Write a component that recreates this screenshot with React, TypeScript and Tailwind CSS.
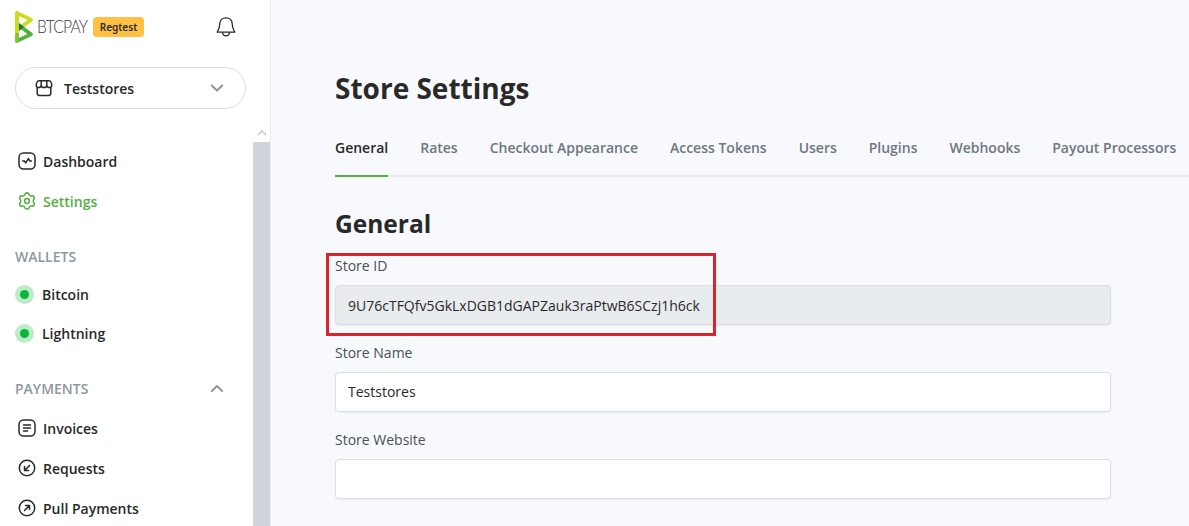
import type { ReactNode } from "react";

const tabs = ["General", "Rates", "Checkout Appearance", "Access Tokens", "Users", "Plugins", "Webhooks", "Payout Processors"];

function polar(radius: number, degrees: number) {
  const angle = (degrees * Math.PI) / 180;
  return `${(12 + radius * Math.sin(angle)).toFixed(2)} ${(12 - radius * Math.cos(angle)).toFixed(2)}`;
}

const gearPath =
  `M${polar(7.5, -14)}` +
  [0, 60, 120, 180, 240, 300]
    .map((a) => `Q${polar(9, a)} ${polar(7.5, a + 14)}Q${polar(5.1, a + 30)} ${polar(7.5, a + 46)}`)
    .join("") +
  "Z";

function Icon({ children }: { children: ReactNode }) {
  return (
    <svg className="size-6 shrink-0" viewBox="0 0 24 24" fill="none" stroke="currentColor" strokeWidth="1.5" strokeLinecap="round" strokeLinejoin="round">
      {children}
    </svg>
  );
}

function Logo() {
  return (
    <svg className="h-8 w-[18px] shrink-0" viewBox="0 0 47 84">
      <path d="M5.206 83.433a4.86 4.86 0 01-4.859-4.861V5.431a4.86 4.86 0 119.719 0v73.141a4.861 4.861 0 01-4.86 4.861" fill="#CEDC21" />
      <path d="M5.209 83.433a4.862 4.862 0 01-2.086-9.253L32.43 60.274 2.323 38.093a4.861 4.861 0 015.766-7.826l36.647 26.999a4.864 4.864 0 01-.799 8.306L7.289 82.964a4.866 4.866 0 01-2.080.469" fill="#51B13E" />
      <path d="M5.211 54.684a4.86 4.86 0 01-2.887-8.774L32.43 23.73 3.123 9.821a4.861 4.861 0 014.166-8.784l36.648 17.394a4.86 4.86 0 01.799 8.305l-36.647 27a4.844 4.844 0 01-2.878.948" fill="#CEDC21" />
      <path d="M10.066 31.725v20.553L24.01 42.006z" fill="#1E7A44" />
      <path d="M10.066 5.431A4.861 4.861 0 005.206.57 4.86 4.86 0 00.347 5.431v61.165h9.72V5.431z" fill="#CEDC21" />
      <path d="M.347 58v20.572a4.86 4.86 0 009.719 0V58z" fill="#7dc433" />
    </svg>
  );
}

function NavItem({ icon, label, active }: { icon: ReactNode; label: string; active?: boolean }) {
  return (
    <a className={active ? "flex h-10 shrink-0 items-center gap-1 text-[#51b13e]" : "flex h-10 shrink-0 items-center gap-1"}>
      {icon}
      <span>{label}</span>
    </a>
  );
}

function Wallet({ label }: { label: string }) {
  return (
    <a className="flex h-[39px] shrink-0 items-center gap-2">
      <span className="flex size-[19px] items-center justify-center rounded-full bg-[#bcecc7]">
        <span className="size-[9px] rounded-full bg-[#0ab53a]" />
      </span>
      <span>{label}</span>
    </a>
  );
}

function Field({ label, value, readOnly }: { label: string; value: string; readOnly?: boolean }) {
  return (
    <div className="flex h-[86.75px] flex-col">
      <label className="mb-2 h-[22px] text-[14px] leading-[22px] text-[#495057]">{label}</label>
      <input
        className={
          readOnly
            ? "h-[40.4px] w-full rounded border border-[#dcdfe2] bg-[#e9ecef] px-3 text-[14px] shadow-xs outline-none"
            : "h-[40.4px] w-full rounded border border-[#dcdfe2] bg-white px-3 text-[14px] shadow-xs outline-none"
        }
        defaultValue={value}
        readOnly={readOnly}
      />
    </div>
  );
}

export default function App() {
  return (
    <div className="flex h-[526px] w-[1189px] overflow-hidden bg-[#f8f9fc] font-['Open_Sans',sans-serif] text-[14px] text-[#292929]">
      <aside className="flex w-[271px] shrink-0 flex-col border-r border-[#e9ecef] bg-white">
        <header className="flex h-[53px] items-center pl-[15px]">
          <Logo />
          <span className="ml-1 w-[52px] origin-left scale-x-[0.92] font-['Lato',sans-serif] text-[17px] font-light tracking-[-0.9px] text-[#3c3c3c]">BTCPAY</span>
          <span className="ml-1 flex h-5 w-[51px] items-center justify-center rounded bg-[#ffc043] pt-px font-['Noto_Sans',sans-serif] text-[10px] font-semibold">Regtest</span>
          <svg className="ml-[70px] size-6" viewBox="0 0 24 24" fill="none" stroke="currentColor" strokeWidth="1.3" strokeLinejoin="round">
            <path d="M12 2.800c-3.800 0-6.100 2.700-6.200 6-.1 4-.9 5.800-2.600 8.400h17.600c-1.700-2.600-2.500-4.400-2.600-8.400-.1-3.300-2.400-6-6.200-6Z" />
            <path d="M8.500 17.300c.2 2.300 1.600 3.600 3.500 3.600s3.300-1.300 3.500-3.600" />
          </svg>
        </header>
        <button className="mt-[14px] ml-[15px] flex h-[42px] w-[231px] items-center rounded-full border border-[#dcdfe2] pr-4 pl-4 font-semibold">
          <Icon>
            <path d="M5.200 11v6.200a2.400 2.400 0 0 0 2.400 2.400h8.800a2.400 2.400 0 0 0 2.400-2.400V11M6.800 4.800h10.400c1.600 0 2.500 2.800 2.500 4.500a2.100 2.100 0 0 1-2.100 2.300c-1.600 0-2.800-1-2.800-2.400 0 1.400-1.200 2.400-2.800 2.400S9.200 10.600 9.200 9.200c0 1.400-1.200 2.400-2.800 2.400a2.100 2.100 0 0 1-2.100-2.300c0-1.700.9-4.500 2.500-4.500ZM9.200 5v4.200M14.800 5v4.200" />
          </Icon>
          <span className="ml-2">Teststores</span>
          <svg className="ml-auto size-6 text-[#8f979e]" viewBox="0 0 24 24" fill="none" stroke="currentColor" strokeWidth="2" strokeLinecap="round" strokeLinejoin="round">
            <path d="m6.800 9.500 5.200 5 5.200-5" />
          </svg>
        </button>
        <div className="mt-[17px] flex min-h-0 flex-1">
          <nav className="flex w-[253px] flex-col pt-[15px] pl-[15px] font-semibold">
            <NavItem
              label="Dashboard"
              icon={
                <Icon>
                  <rect x="4" y="4" width="16" height="16" rx="4.500" />
                  <path d="M7.600 12h1.700l1.400 1.900 2.700-4.300 1.500 2.400h1.500" />
                </Icon>
              }
            />
            <NavItem
              active
              label="Settings"
              icon={
                <Icon>
                  <path d={gearPath} />
                  <circle cx="12" cy="12" r="2.400" />
                </Icon>
              }
            />
            <div className="mt-[25px] mb-2 flex h-[21px] shrink-0 items-center text-[#8f979e]">WALLETS</div>
            <Wallet label="Bitcoin" />
            <Wallet label="Lightning" />
            <div className="mt-[25px] mb-[9px] flex h-[21px] w-[214px] shrink-0 items-center justify-between text-[#8f979e]">
              <span>PAYMENTS</span>
              <svg className="size-6" viewBox="0 0 24 24" fill="none" stroke="currentColor" strokeWidth="2" strokeLinecap="round" strokeLinejoin="round">
                <path d="m6.800 14 5.200-5 5.200 5" />
              </svg>
            </div>
            <NavItem
              label="Invoices"
              icon={
                <Icon>
                  <rect x="4" y="4" width="16" height="16" rx="4.500" />
                  <path d="M8.500 9h7M8.500 12h7M8.500 15h4" />
                </Icon>
              }
            />
            <NavItem
              label="Requests"
              icon={
                <Icon>
                  <circle cx="12" cy="12" r="7.700" />
                  <path d="m14.500 9.500-5 5M9.500 10.500v4h4" />
                </Icon>
              }
            />
            <NavItem
              label="Pull Payments"
              icon={
                <Icon>
                  <circle cx="12" cy="12" r="7.700" />
                  <path d="m9.500 14.500 5-5M10.500 9.500h4v4" />
                </Icon>
              }
            />
          </nav>
          <div className="flex w-[17px] flex-col">
            <div className="flex h-4 items-center justify-center pb-[2px]">
              <svg className="h-2 w-[10px]" viewBox="0 0 10 8" fill="none" stroke="#ced4da" strokeWidth="2">
                <path d="m1 6 4-4 4 4" />
              </svg>
            </div>
            <div className="flex-1 bg-[#ced4da]" />
          </div>
        </div>
      </aside>
      <main className="flex min-w-0 flex-1 flex-col pt-[67px] pl-16">
        <h1 className="h-[42px] text-[28px] leading-[43px] font-bold">Store Settings</h1>
        <div className="mt-[28px] flex h-[40px] gap-[31.95px] border-b-2 border-[#e9ecef] font-semibold whitespace-nowrap text-[#6e7780]">
          {tabs.map((tab) => (
            <a key={tab} className={tab === "General" ? "-mb-[2px] h-[40px] border-b-2 border-[#51b13e] leading-[21px] text-[#292929]" : "leading-[21px]"}>
              {tab}
            </a>
          ))}
        </div>
        <h2 className="mt-[28px] h-[38px] text-[24.5px] leading-[37px] font-bold">General</h2>
        <section className="relative mt-[12px] w-[776px]">
          <Field label="Store ID" value="9U76cTFQfv5GkLxDGB1dGAPZauk3raPtwB6SCzj1h6ck" readOnly />
          <Field label="Store Name" value="Teststores" />
          <Field label="Store Website" value="" />
          <div className="pointer-events-none absolute -top-[2px] -left-[9px] h-[83px] w-[390px] border-3 border-[#da232a]" />
        </section>
      </main>
    </div>
  );
}
